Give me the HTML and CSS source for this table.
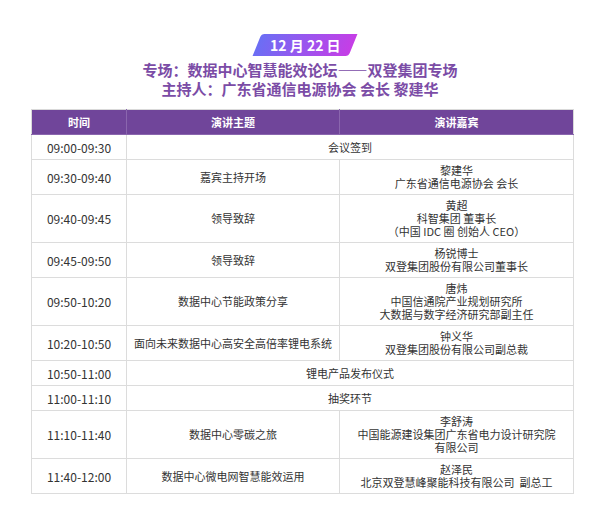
FILE: index.html
```html
<!DOCTYPE html>
<html lang="zh-CN">
<head>
<meta charset="utf-8">
<link rel="stylesheet" href="styles.css">
</head>
<body>
<div class="page">
  <div class="badge-wrap"><div class="badge"><span class="badge-text">12 月 22 日</span></div></div>
  <div class="titles">
    <div class="title">专场：数据中心智慧能效论坛——双登集团专场</div>
    <div class="title">主持人：广东省通信电源协会 会长 黎建华</div>
  </div>
  <table class="agenda">
    <colgroup>
      <col class="c-time"><col class="c-topic"><col class="c-guest">
    </colgroup>
    <thead>
      <tr><th>时间</th><th>演讲主题</th><th>演讲嘉宾</th></tr>
    </thead>
    <tbody>
      <tr><td class="time">09:00-09:30</td><td colspan="2">会议签到</td></tr>
      <tr><td class="time">09:30-09:40</td><td>嘉宾主持开场</td><td>黎建华<br>广东省通信电源协会 会长</td></tr>
      <tr><td class="time">09:40-09:45</td><td>领导致辞</td><td>黄超<br>科智集团 董事长<br>（中国 IDC 圈 创始人 CEO）</td></tr>
      <tr><td class="time">09:45-09:50</td><td>领导致辞</td><td>杨锐博士<br>双登集团股份有限公司董事长</td></tr>
      <tr><td class="time">09:50-10:20</td><td>数据中心节能政策分享</td><td>唐炜<br>中国信通院产业规划研究所<br>大数据与数字经济研究部副主任</td></tr>
      <tr><td class="time">10:20-10:50</td><td>面向未来数据中心高安全高倍率锂电系统</td><td>钟义华<br>双登集团股份有限公司副总裁</td></tr>
      <tr><td class="time">10:50-11:00</td><td colspan="2">锂电产品发布仪式</td></tr>
      <tr><td class="time">11:00-11:10</td><td colspan="2">抽奖环节</td></tr>
      <tr><td class="time">11:10-11:40</td><td>数据中心零碳之旅</td><td>李舒涛<br>中国能源建设集团广东省电力设计研究院<br>有限公司</td></tr>
      <tr><td class="time">11:40-12:00</td><td>数据中心微电网智慧能效运用</td><td>赵泽民<br>北京双登慧峰聚能科技有限公司&nbsp; 副总工</td></tr>
    </tbody>
  </table>
</div>
</body>
</html>
```

FILE: styles.css
```css
* { box-sizing: border-box; }
html, body {
  margin: 0;
  padding: 0;
  background: #ffffff;
}
body {
  font-family: "Noto Sans CJK SC", "Noto Sans", sans-serif;
  color: #333333;
}
.page {
  width: 600px;
  padding-top: 34px;
}
.badge-wrap {
  display: flex;
  justify-content: center;
  padding-left: 10px;
}
.badge {
  width: 96px;
  height: 22px;
  transform: skewX(-22deg);
  background: linear-gradient(90deg, #6b6ef4 0%, #9a55ee 50%, #c63ee6 100%);
  border-radius: 3px 0 3px 0;
  display: flex;
  align-items: center;
  justify-content: center;
}
.badge-text {
  transform: skewX(22deg);
  color: #ffffff;
  font-weight: 700;
  font-size: 14px;
  line-height: 22px;
}
.titles {
  margin-top: 4px;
  text-align: center;
  color: #7b4ca6;
  font-weight: 700;
  font-size: 15px;
  line-height: 19px;
}
.agenda {
  margin: 11px 0 0 31px;
  width: 542px;
  border-collapse: collapse;
  table-layout: fixed;
  font-size: 11px;
  line-height: 13px;
}
.c-time { width: 95px; }
.c-topic { width: 213px; }
.c-guest { width: 234px; }
.agenda th {
  background: #70459a;
  color: #ffffff;
  font-weight: 700;
  font-size: 11px;
  height: 25px;
  padding: 0 4px;
  border: 1px solid #8a66ae;
  border-top-color: #d9d9d9;
  text-align: center;
}
.agenda th:first-child { border-left-color: #d9d9d9; }
.agenda th:last-child { border-right-color: #d9d9d9; }
.agenda td {
  border: 1px solid #dcdcdc;
  padding: 4px 4px;
  text-align: center;
  vertical-align: middle;
  height: 25px;
  color: #333333;
}
.agenda td.time {
  font-size: 12px;
}
```
